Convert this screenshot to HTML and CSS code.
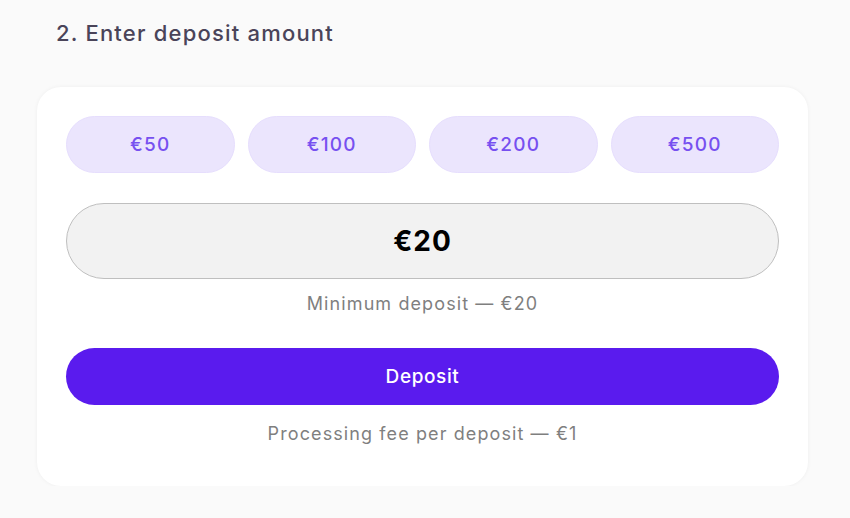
FILE: index.html
```html
<!DOCTYPE html>
<html>
<head>
<meta charset="utf-8">
<link rel="stylesheet" href="styles.css">
</head>
<body>
<div class="page">
  <h2 class="title">2. Enter deposit amount</h2>
  <div class="card">
    <div class="chips">
      <button class="chip">€50</button>
      <button class="chip">€100</button>
      <button class="chip">€200</button>
      <button class="chip">€500</button>
    </div>
    <div class="amount">€20</div>
    <p class="note">Minimum deposit — €20</p>
    <button class="deposit">Deposit</button>
    <p class="note fee">Processing fee per deposit — €1</p>
  </div>
</div>
</body>
</html>
```
FILE: styles.css
```css
* { box-sizing: border-box; }
html, body { margin: 0; padding: 0; background: #fafafa; }
body { font-family: "Inter", "Open Sans", sans-serif; }
.page { padding: 18px 0 0 37px; width: 808px; }
.title {
  margin: 0 0 39px 19px;
  font-size: 22px;
  font-weight: 500;
  line-height: 30px;
  letter-spacing: 1.2px;
  color: #4a4459;
}
.card {
  width: 771px;
  background: #fff;
  border-radius: 24px;
  box-shadow: 0 0 4px rgba(0,0,0,0.05);
  padding: 29px 29px 39px 29px;
  display: flex;
  flex-direction: column;
}
.chips {
  display: grid;
  grid-template-columns: repeat(4, 1fr);
  gap: 13px;
}
.chip {
  height: 57px;
  border: 1px solid #e6defd;
  border-radius: 29px;
  background: #ebe5fd;
  color: #7750f0;
  font-family: inherit;
  font-size: 19px;
  font-weight: 500;
  letter-spacing: 1.2px;
}
.amount {
  margin-top: 30px;
  height: 76px;
  border: 1px solid #bfbfbf;
  border-radius: 38px;
  background: #f2f2f2;
  display: flex;
  align-items: center;
  justify-content: center;
  font-size: 28px;
  font-weight: 700;
  letter-spacing: 1px;
  color: #000;
}
.note {
  margin: 12px 0 0 0;
  text-align: center;
  font-size: 18px;
  line-height: 26px;
  letter-spacing: 1.1px;
  color: #7f7f7f;
}
.deposit {
  margin-top: 31px;
  height: 57px;
  border: none;
  border-radius: 29px;
  background: #5a1bee;
  color: #fff;
  font-family: inherit;
  font-size: 19px;
  font-weight: 500;
  letter-spacing: 0.6px;
}
.fee { margin-top: 16px; }
```
